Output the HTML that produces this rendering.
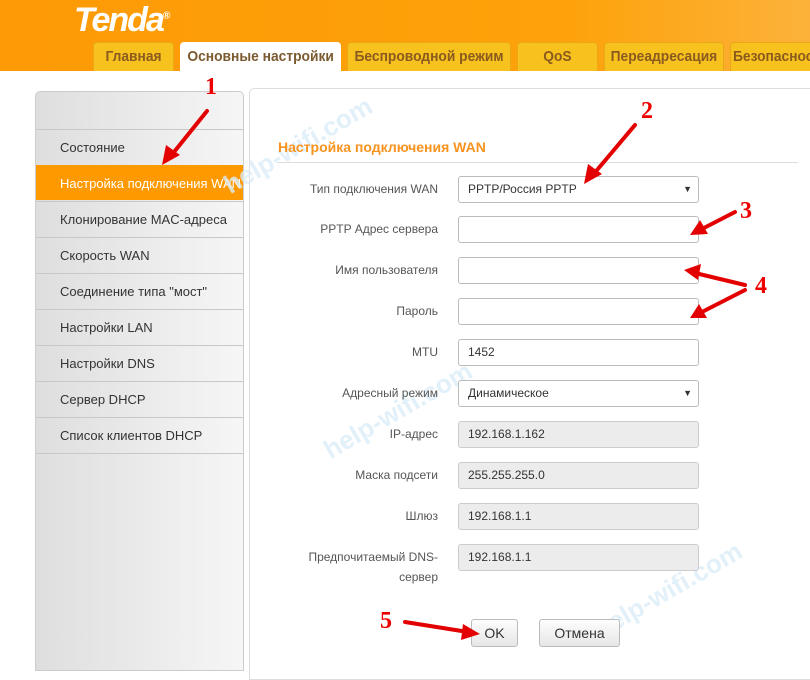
<!DOCTYPE html><html><head><meta charset="utf-8"><style>
body{margin:0;width:810px;height:664px;overflow:hidden;background:#fff;font-family:"Liberation Sans",sans-serif;position:relative}
.hdr{position:absolute;left:0;top:0;width:810px;height:71px;background:linear-gradient(90deg,#fd9a05,#fda20a 70%,#fcb23a)}
.logo{position:absolute;left:74px;top:1px;color:#fff;font:italic bold 34px "Liberation Sans",sans-serif;letter-spacing:-2px}
.tab{position:absolute;top:42px;height:29px;background:#f8c21e;border:1px solid #e8a818;border-bottom:none;border-radius:4px 4px 0 0;color:#8a5a1e;font-weight:bold;font-size:15px;text-align:center;line-height:28px;box-sizing:border-box;white-space:nowrap;overflow:hidden}
.tab span{display:inline-block;transform:scaleX(.92)}
.tab.on{background:#fff;color:#7a5a2e;border-color:#fff}
.side{position:absolute;left:35px;top:91px;width:209px;height:580px;border:1px solid #ccc;border-radius:5px 5px 0 0;background:linear-gradient(90deg,#dedede,#f6f6f6);box-sizing:border-box}
.it{position:absolute;left:0;width:207px;height:35px;border-top:1px solid #c8c8c8;font-size:13px;color:#333;line-height:35px;padding-left:24px;box-sizing:border-box}
.it.on{background:#fe9900;color:#fff;border-color:#fe9900}
.main{position:absolute;left:249px;top:88px;width:570px;height:590px;border:1px solid #ddd;border-radius:5px 0 0 0}
.title{position:absolute;left:278px;top:139px;color:#f7931e;font-weight:bold;font-size:14px}
.line{position:absolute;left:277px;top:162px;width:521px;border-top:1px solid #ddd}
.lb{position:absolute;right:372px;font-size:12px;color:#555;text-align:right;line-height:20px}
.in{position:absolute;left:458px;width:241px;height:27px;border:1px solid #bbb;border-radius:3px;box-sizing:border-box;font-size:12px;color:#333;line-height:25px;padding-left:9px;background:#fff}
.in.g{background:#ececec;border-color:#ccc}
.in.s::after{content:"▼";position:absolute;right:6px;top:0;font-size:9px}
.btn{position:absolute;top:619px;height:28px;border:1px solid #bbb;border-radius:3px;background:linear-gradient(#fdfdfd,#e6e6e6);font-size:14px;color:#333;text-align:center;line-height:27px;box-sizing:border-box}
.wm{position:absolute;color:#dcedf8;font-weight:bold;font-size:26px;transform:rotate(-30deg);opacity:.8}
.n{position:absolute;color:#e00;font:bold 24px "Liberation Serif",serif}
</style></head><body>
<div class="hdr"><div class="logo">Tenda<sup style="font-size:10px">®</sup></div></div>
<div class="tab" style="left:93px;width:81px"><span>Главная</span></div>
<div class="tab on" style="left:180px;width:161px"><span>Основные настройки</span></div>
<div class="tab" style="left:347px;width:164px"><span>Беспроводной режим</span></div>
<div class="tab" style="left:517px;width:81px"><span>QoS</span></div>
<div class="tab" style="left:604px;width:120px"><span>Переадресация</span></div>
<div class="tab" style="left:730px;width:90px;text-align:left;padding-left:2px"><span style="transform-origin:left">Безопасность</span></div>
<div class="side">
<div class="it" style="top:37px">Состояние</div>
<div class="it on" style="top:73px">Настройка подключения WAN</div>
<div class="it" style="top:109px">Клонирование MAC-адреса</div>
<div class="it" style="top:145px">Скорость WAN</div>
<div class="it" style="top:181px">Соединение типа "мост"</div>
<div class="it" style="top:217px">Настройки LAN</div>
<div class="it" style="top:253px">Настройки DNS</div>
<div class="it" style="top:289px">Сервер DHCP</div>
<div class="it" style="top:325px">Список клиентов DHCP</div>
<div class="it" style="top:361px"></div>
</div>
<div class="main"></div>
<div class="wm" style="left:215px;top:130px">help-wifi.com</div>
<div class="wm" style="left:315px;top:395px">help-wifi.com</div>
<div class="wm" style="left:585px;top:575px">help-wifi.com</div>
<div class="title">Настройка подключения WAN</div><div class="line"></div>
<div class="lb" style="top:179px">Тип подключения WAN</div><div class="in s" style="top:176px">PPTP/Россия PPTP</div>
<div class="lb" style="top:219px">PPTP Адрес сервера</div><div class="in" style="top:216px"></div>
<div class="lb" style="top:260px">Имя пользователя</div><div class="in" style="top:257px"></div>
<div class="lb" style="top:301px">Пароль</div><div class="in" style="top:298px"></div>
<div class="lb" style="top:342px">MTU</div><div class="in" style="top:339px">1452</div>
<div class="lb" style="top:383px">Адресный режим</div><div class="in s" style="top:380px">Динамическое</div>
<div class="lb" style="top:424px">IP-адрес</div><div class="in g" style="top:421px">192.168.1.162</div>
<div class="lb" style="top:465px">Маска подсети</div><div class="in g" style="top:462px">255.255.255.0</div>
<div class="lb" style="top:506px">Шлюз</div><div class="in g" style="top:503px">192.168.1.1</div>
<div class="lb" style="top:547px">Предпочитаемый DNS-<br>сервер</div><div class="in g" style="top:544px">192.168.1.1</div>
<div class="btn" style="left:471px;width:47px">OK</div>
<div class="btn" style="left:539px;width:81px">Отмена</div>
<div class="n" style="left:205px;top:74px">1</div>
<div class="n" style="left:641px;top:98px">2</div>
<div class="n" style="left:740px;top:198px">3</div>
<div class="n" style="left:755px;top:273px">4</div>
<div class="n" style="left:380px;top:608px">5</div>
<svg style="position:absolute;left:0;top:0" width="810" height="664"><g stroke="#e30000" stroke-width="4" stroke-linecap="round" fill="#e30000">
<line x1="207" y1="111" x2="170" y2="157"/><polygon points="162,165 166,145 180,155" stroke="none"/>
<line x1="635" y1="125" x2="592" y2="176"/><polygon points="584,184 588,164 602,174" stroke="none"/>
<line x1="735" y1="212" x2="700" y2="230"/><polygon points="690,235 700,220 708,234" stroke="none"/>
<line x1="745" y1="285" x2="695" y2="273"/><polygon points="684,270 701,264 698,280" stroke="none"/>
<line x1="745" y1="290" x2="700" y2="313"/><polygon points="690,318 699,304 707,318" stroke="none"/>
<line x1="405" y1="622" x2="468" y2="632"/><polygon points="480,634 463,624 461,640" stroke="none"/>
</g></svg>
</body></html>
